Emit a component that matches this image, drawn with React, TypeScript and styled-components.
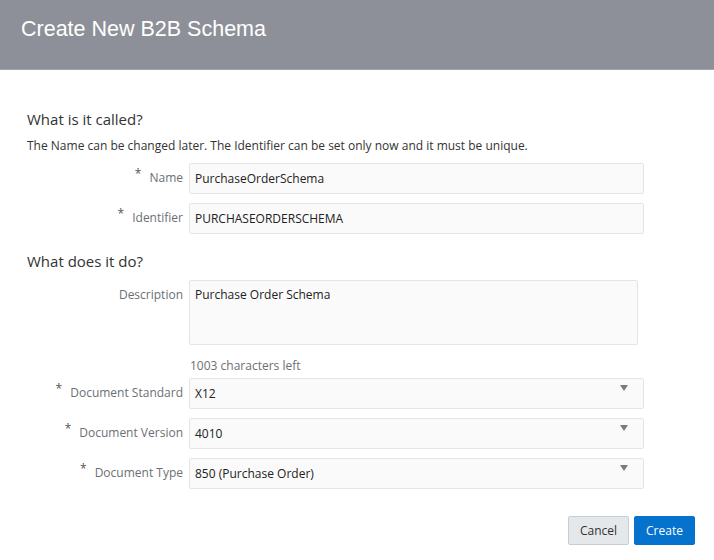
import React from "react";
import styled, { createGlobalStyle } from "styled-components";

const Global = createGlobalStyle`
  html, body { margin: 0; padding: 0; background: #fff; }
  body { font-family: "Open Sans", "Noto Sans", sans-serif; }
`;

const Page = styled.div`
  width: 714px;
  height: 560px;
  display: flex;
  flex-direction: column;
  background: #fff;
`;

const Header = styled.header`
  height: 70px;
  box-sizing: border-box;
  background: #8e9099;
  border-bottom: 1px solid #a3a5ad;
  display: flex;
  align-items: center;
  padding: 0 21px 11px;
`;

const Title = styled.h1`
  margin: 0;
  font-family: "Liberation Sans", Arial, sans-serif;
  font-weight: 400;
  font-size: 21.5px;
  color: #fff;
`;

const Body = styled.main`
  padding: 39px 19px 0 27px;
  display: flex;
  flex-direction: column;
`;

const SectionTitle = styled.h2<{ $top?: number }>`
  margin: ${(p) => p.$top ?? 0}px 0 0;
  font-weight: 400;
  font-size: 15px;
  line-height: 20px;
  color: #333;
`;

const Hint = styled.p`
  margin: 9px 0 0;
  font-size: 12px;
  line-height: 16px;
  color: #333;
`;

const Fields = styled.div<{ $top: number }>`
  display: grid;
  grid-template-columns: 156px 455px;
  column-gap: 6px;
  row-gap: 9px;
  margin-top: ${(p) => p.$top}px;
  align-items: start;
`;

const Label = styled.label`
  display: flex;
  justify-content: flex-end;
  align-items: flex-start;
  gap: 8px;
  padding-top: 7px;
  font-size: 12px;
  line-height: 16px;
  color: #6b6f75;
  white-space: nowrap;
`;

const Star = styled.span`
  color: #555;
  font-size: 12px;
  line-height: 12px;
  margin-top: -2px;
`;

const Input = styled.div`
  height: 31px;
  box-sizing: border-box;
  background: #fafafa;
  border: 1px solid #e5e5e5;
  border-radius: 2px;
  padding: 7px 5px;
  font-size: 12px;
  line-height: 16px;
  color: #222;
  position: relative;
`;

const TextArea = styled(Input)`
  height: 65px;
  width: 449px;
  padding-top: 6px;
`;

const Counter = styled.div`
  font-size: 12px;
  line-height: 16px;
  color: #6b6f75;
  padding: 4px 0 0 1px;
  margin-bottom: -5px;
`;

const Arrow = styled.span`
  position: absolute;
  right: 15px;
  top: 6px;
  width: 0;
  height: 0;
  border-left: 4px solid transparent;
  border-right: 4px solid transparent;
  border-top: 6px solid #7a7a7a;
`;

const Footer = styled.div`
  display: flex;
  justify-content: flex-end;
  gap: 5px;
  margin-top: 27px;
`;

const Button = styled.button<{ $primary?: boolean }>`
  height: 29px;
  width: 61px;
  box-sizing: border-box;
  border-radius: 2px;
  font-family: "Open Sans", "Noto Sans", sans-serif;
  font-size: 12px;
  padding: 0;
  cursor: pointer;
  background: ${(p) => (p.$primary ? "#0572ce" : "#e4e8ea")};
  border: 1px solid ${(p) => (p.$primary ? "#0572ce" : "#c4ced7")};
  color: ${(p) => (p.$primary ? "#fff" : "#333")};
`;

const Spacer = styled.div``;

function Field({ label, required, value, select }: { label: string; required?: boolean; value: string; select?: boolean }) {
  return (
    <>
      <Label>
        {required && <Star>*</Star>}
        {label}
      </Label>
      <Input>
        {value}
        {select && <Arrow />}
      </Input>
    </>
  );
}

export default function App() {
  return (
    <Page>
      <Global />
      <Header>
        <Title>Create New B2B Schema</Title>
      </Header>
      <Body>
        <SectionTitle>What is it called?</SectionTitle>
        <Hint>The Name can be changed later. The Identifier can be set only now and it must be unique.</Hint>
        <Fields $top={9}>
          <Field label="Name" required value="PurchaseOrderSchema" />
          <Field label="Identifier" required value="PURCHASEORDERSCHEMA" />
        </Fields>
        <SectionTitle $top={17}>What does it do?</SectionTitle>
        <Fields $top={9}>
          <Label>Description</Label>
          <TextArea>Purchase Order Schema</TextArea>
          <Spacer />
          <Counter>1003 characters left</Counter>
          <Field label="Document Standard" required value="X12" select />
          <Field label="Document Version" required value="4010" select />
          <Field label="Document Type" required value="850 (Purchase Order)" select />
        </Fields>
        <Footer>
          <Button>Cancel</Button>
          <Button $primary>Create</Button>
        </Footer>
      </Body>
    </Page>
  );
}
